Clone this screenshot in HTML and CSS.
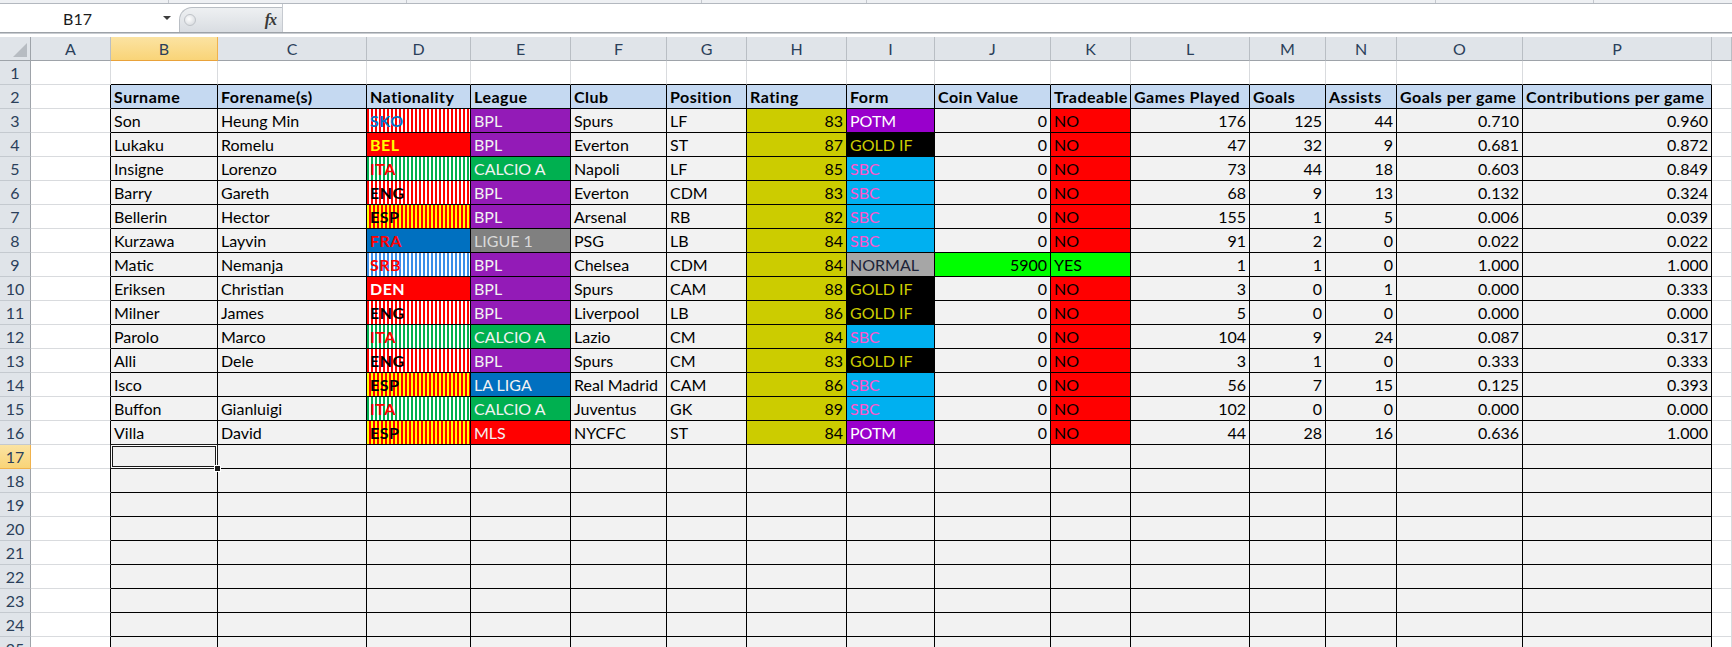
FILE: index.html
```html
<!DOCTYPE html>
<html lang="en">
<head>
  <meta charset="UTF-8" />
  <title>FUT Players</title>
  <link rel="stylesheet" href="styles.css">
</head>
<body>

  <div class="ribbon">
    <span class="rib-sep s1"></span>
    <span class="rib-sep s2"></span>
    <span class="rib-sep s3"></span>
    <span class="rib-sep s4"></span>
    <span class="rib-sep s5"></span>
    <span class="rib-sep s6"></span>
  </div>

  <div class="formula-bar">
    <div class="name-box">
      <span class="ref">B17</span>
      <span class="arrow"></span>
    </div>
    <div class="fx-zone">
      <span class="grip"></span>
      <span class="fx">fx</span>
    </div>
    <div class="formula-input"></div>
  </div>
  <div class="split"></div>

  <table class="sheet" id="sheet">
    <colgroup>
      <col class="w-rh"><col class="w-a"><col class="w-b"><col class="w-c"><col class="w-d">
      <col class="w-e"><col class="w-f"><col class="w-g"><col class="w-h"><col class="w-i">
      <col class="w-j"><col class="w-k"><col class="w-l"><col class="w-m"><col class="w-n">
      <col class="w-o"><col class="w-p"><col class="w-q">
    </colgroup>
    <tbody id="rows"></tbody>
  </table>

  <script>
    const letters = ["A","B","C","D","E","F","G","H","I","J","K","L","M","N","O","P",""];

    const cabeceras = ["Surname","Forename(s)","Nationality","League","Club","Position","Rating","Form",
      "Coin Value","Tradeable","Games Played","Goals","Assists","Goals per game","Contributions per game"];

    const jugadores = [
      ["Son","Heung Min","SKO","BPL","Spurs","LF",83,"POTM",0,"NO",176,125,44,"0.710","0.960"],
      ["Lukaku","Romelu","BEL","BPL","Everton","ST",87,"GOLD IF",0,"NO",47,32,9,"0.681","0.872"],
      ["Insigne","Lorenzo","ITA","CALCIO A","Napoli","LF",85,"SBC",0,"NO",73,44,18,"0.603","0.849"],
      ["Barry","Gareth","ENG","BPL","Everton","CDM",83,"SBC",0,"NO",68,9,13,"0.132","0.324"],
      ["Bellerin","Hector","ESP","BPL","Arsenal","RB",82,"SBC",0,"NO",155,1,5,"0.006","0.039"],
      ["Kurzawa","Layvin","FRA","LIGUE 1","PSG","LB",84,"SBC",0,"NO",91,2,0,"0.022","0.022"],
      ["Matic","Nemanja","SRB","BPL","Chelsea","CDM",84,"NORMAL",5900,"YES",1,1,0,"1.000","1.000"],
      ["Eriksen","Christian","DEN","BPL","Spurs","CAM",88,"GOLD IF",0,"NO",3,0,1,"0.000","0.333"],
      ["Milner","James","ENG","BPL","Liverpool","LB",86,"GOLD IF",0,"NO",5,0,0,"0.000","0.000"],
      ["Parolo","Marco","ITA","CALCIO A","Lazio","CM",84,"SBC",0,"NO",104,9,24,"0.087","0.317"],
      ["Alli","Dele","ENG","BPL","Spurs","CM",83,"GOLD IF",0,"NO",3,1,0,"0.333","0.333"],
      ["Isco","","ESP","LA LIGA","Real Madrid","CAM",86,"SBC",0,"NO",56,7,15,"0.125","0.393"],
      ["Buffon","Gianluigi","ITA","CALCIO A","Juventus","GK",89,"SBC",0,"NO",102,0,0,"0.000","0.000"],
      ["Villa","David","ESP","MLS","NYCFC","ST",84,"POTM",0,"NO",44,28,16,"0.636","1.000"]
    ];

    const ligas = { "BPL": "lg-bpl", "CALCIO A": "lg-calcio", "LIGUE 1": "lg-ligue", "LA LIGA": "lg-liga", "MLS": "lg-mls" };
    const formas = { "POTM": "fm-potm", "GOLD IF": "fm-gold", "SBC": "fm-sbc", "NORMAL": "fm-normal" };

    function claseCelda(i, valor) {
      if (i === 2) return "nat nat-" + valor.toLowerCase();
      if (i === 3) return ligas[valor];
      if (i === 6) return "num rating";
      if (i === 7) return formas[valor];
      if (i === 8) return valor > 0 ? "num coin-yes" : "num";
      if (i === 9) return valor === "YES" ? "tr-yes" : "tr-no";
      if (i >= 10) return "num";
      return "";
    }

    const tbody = document.getElementById("rows");
    let html = '<tr><th class="corner"></th>';
    letters.forEach(l => {
      html += `<th class="ch${l === "B" ? " on" : ""}">${l}</th>`;
    });
    html += "</tr>";

    for (let r = 1; r <= 25; r++) {
      html += `<tr><th class="rh${r === 17 ? " on" : ""}">${r}</th>`;
      html += `<td class="${r >= 2 ? "edge" : ""}"></td>`;
      for (let c = 0; c < 15; c++) {
        if (r === 1) {
          html += '<td class="top"></td>';
        } else if (r === 2) {
          html += `<td class="t head">${cabeceras[c]}</td>`;
        } else if (r <= 16) {
          const v = jugadores[r - 3][c];
          html += `<td class="t ${claseCelda(c, v)}">${v}</td>`;
        } else if (r === 17 && c === 0) {
          html += '<td class="t sel"><div class="cursor"><span class="handle"></span></div></td>';
        } else {
          html += '<td class="t"></td>';
        }
      }
      html += "<td></td></tr>";
    }
    tbody.innerHTML = html;
  </script>

</body>
</html>
```

FILE: styles.css
```css
* {
  box-sizing: border-box;
}

body {
  margin: 0;
  width: 1732px;
  height: 647px;
  overflow: hidden;
  background: #ffffff;
  font-family: Lato, 'Liberation Sans', sans-serif;
  font-size: 16px;
  color: #000000;
}

/* ribbon edge + formula bar */
.ribbon {
  position: relative;
  height: 4px;
  background: #eef0f3;
  border-bottom: 1px solid #b3b8bf;
}

.rib-sep {
  position: absolute;
  top: 0;
  width: 1px;
  height: 3px;
  background: #c4c8ce;
}

.s1 { left: 168px; }
.s2 { left: 406px; }
.s3 { left: 701px; }
.s4 { left: 866px; }
.s5 { left: 1435px; }
.s6 { left: 1593px; }

.formula-bar {
  display: flex;
  height: 28px;
  background: #ffffff;
}

.name-box {
  width: 176px;
  display: flex;
  align-items: center;
}

.name-box .ref {
  width: 155px;
  text-align: center;
  color: #1b1b1b;
}

.name-box .arrow {
  width: 0;
  height: 0;
  margin-left: 8px;
  border-left: 4px solid transparent;
  border-right: 4px solid transparent;
  border-top: 4px solid #3c3c3c;
}

.fx-zone {
  width: 103px;
  margin-left: 3px;
  margin-top: 3px;
  display: flex;
  align-items: center;
  justify-content: space-between;
  padding: 0 6px 0 4px;
  border: 1px solid #b9bec4;
  border-right: none;
  border-bottom: none;
  border-radius: 13px 0 0 0;
  background: linear-gradient(#eef0f2, #d9dde2);
}

.grip {
  width: 12px;
  height: 12px;
  border-radius: 50%;
  border: 1px solid #bfc3c8;
  background: radial-gradient(circle at 40% 40%, #ffffff, #cfd3d8);
}

.fx {
  font-family: 'Liberation Serif', serif;
  font-style: italic;
  font-weight: bold;
  font-size: 16px;
  color: #3a3a3a;
  letter-spacing: -1px;
}

.formula-input {
  flex: 1;
  border-left: 1px solid #c6cad0;
}

.split {
  height: 5px;
  border-top: 1px solid #9da2a8;
  background: linear-gradient(#c8ccd1 0 1px, #ffffff 1px);
}

/* grid */
.sheet {
  border-collapse: separate;
  border-spacing: 0;
  table-layout: fixed;
  width: 1732px;
}

.w-rh { width: 31px; }
.w-a { width: 80px; }
.w-b { width: 107px; }
.w-c { width: 149px; }
.w-d { width: 104px; }
.w-e { width: 100px; }
.w-f { width: 96px; }
.w-g { width: 80px; }
.w-h { width: 100px; }
.w-i { width: 88px; }
.w-j { width: 116px; }
.w-k { width: 80px; }
.w-l { width: 119px; }
.w-m { width: 76px; }
.w-n { width: 71px; }
.w-o { width: 126px; }
.w-p { width: 189px; }
.w-q { width: 20px; }

.sheet td,
.sheet th {
  height: 24px;
  padding: 0 3px;
  line-height: 23px;
  white-space: nowrap;
  overflow: hidden;
  font-weight: normal;
  border-right: 1px solid #d9dbde;
  border-bottom: 1px solid #d9dbde;
}

.sheet th.ch,
.sheet th.rh,
.sheet th.corner {
  background: #e0e4e9;
  color: #2b3f5a;
  text-align: center;
  padding: 0;
}

.sheet th.ch {
  border-right: 1px solid #b9bec4;
  border-bottom: 1px solid #9ea3a9;
}

.sheet th.rh {
  border-right: 1px solid #9ea3a9;
  border-bottom: 1px solid #c4c9cf;
}

.sheet th.corner {
  position: relative;
  border-right: 1px solid #9ea3a9;
  border-bottom: 1px solid #9ea3a9;
}

.sheet th.corner::after {
  content: "";
  position: absolute;
  right: 3px;
  bottom: 3px;
  border-left: 14px solid transparent;
  border-bottom: 14px solid #b7bcc2;
}

.sheet th.on {
  background: linear-gradient(#fbe3a2, #f9d478);
  border-color: #f0b24c;
}

.sheet th.ch.on {
  border-bottom: 1px solid #e9a23a;
}

.sheet td.edge {
  border-right: 1px solid #000000;
}

.sheet td.top {
  border-bottom: 1px solid #000000;
}

.sheet td.t {
  background: #f2f2f2;
  border-right: 1px solid #000000;
  border-bottom: 1px solid #000000;
}

.sheet td.head {
  background: #c5d9f1;
  font-weight: bold;
  letter-spacing: 0.5px;
}

.num {
  text-align: right;
}

/* nationality */
.sheet td.nat {
  font-weight: bold;
  letter-spacing: 0.5px;
}

.sheet td.nat-sko {
  background: repeating-linear-gradient(90deg, #ff0000 0 2px, #ffffff 2px 4px);
  color: #0070c0;
}

.sheet td.nat-bel {
  background: #ff0000;
  color: #ffff00;
}

.sheet td.nat-ita {
  background: repeating-linear-gradient(90deg, #00b050 0 2px, #ffffff 2px 4px);
  color: #ff0000;
}

.sheet td.nat-eng {
  background: repeating-linear-gradient(90deg, #ff0000 0 2px, #ffffff 2px 4px);
  color: #000000;
}

.sheet td.nat-esp {
  background: repeating-linear-gradient(90deg, #ffff00 0 2px, #ff0000 2px 4px);
  color: #000000;
}

.sheet td.nat-fra {
  background: #0070c0;
  color: #ff0000;
}

.sheet td.nat-srb {
  background: repeating-linear-gradient(90deg, #3b8ee8 0 2px, #ffffff 2px 4px);
  color: #ff0000;
}

.sheet td.nat-den {
  background: #ff0000;
  color: #ffffff;
}

/* league */
.sheet td.lg-bpl { background: #931bb7; color: #f2f2f2; }
.sheet td.lg-calcio { background: #00b050; color: #f2f2f2; }
.sheet td.lg-ligue { background: #808080; color: #d9d9d9; }
.sheet td.lg-liga { background: #0070c0; color: #f2f2f2; }
.sheet td.lg-mls { background: #ff0000; color: #f2f2f2; }

.sheet td.rating { background: #cccc00; }

/* form */
.sheet td.fm-potm { background: #9900cc; color: #ffffff; }
.sheet td.fm-gold { background: #000000; color: #cccc00; }
.sheet td.fm-sbc { background: #00b0f0; color: #ff55cc; }
.sheet td.fm-normal { background: #a6a6a6; color: #1c2338; }

.sheet td.coin-yes { background: #00ff00; }
.sheet td.tr-no { background: #ff0000; }
.sheet td.tr-yes { background: #00ff00; }

/* active cell */
.sheet td.sel {
  position: relative;
  overflow: visible;
}

.cursor {
  position: absolute;
  left: -1px;
  top: -1px;
  right: -1px;
  bottom: -1px;
  border: 1px solid #1a1a1a;
  box-shadow: inset 0 0 0 1px #ffffff, inset 0 0 0 2px #1a1a1a;
}

.handle {
  position: absolute;
  right: -4px;
  bottom: -4px;
  width: 7px;
  height: 7px;
  background: #1a1a1a;
  border: 1px solid #ffffff;
}
```
